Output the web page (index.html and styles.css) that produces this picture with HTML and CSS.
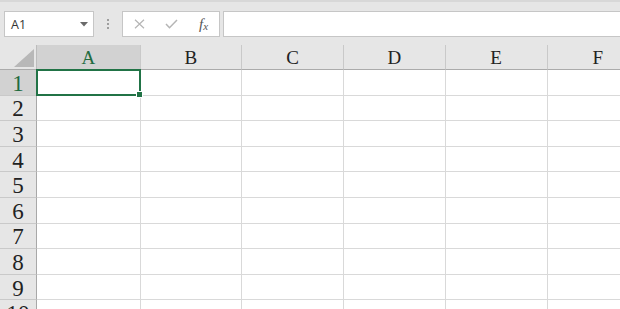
FILE: index.html
```html
<!DOCTYPE html>
<html>
<head>
<meta charset="utf-8">
<link rel="stylesheet" href="styles.css">
</head>
<body>
<div class="app">
  <div class="toolbar">
    <div class="namebox">
      <span class="ref">A1</span>
      <svg class="caret" width="8" height="5" viewBox="0 0 8 5"><polygon points="0,0 8,0 4,4.5" fill="#6a6a6a"/></svg>
    </div>
    <div class="dots"><span></span><span></span><span></span></div>
    <div class="fbtns">
      <svg class="ico" width="11" height="10" viewBox="0 0 11 10"><path d="M1 0.8 L10 9.2 M10 0.8 L1 9.2" stroke="#b5b5b5" stroke-width="1.2" fill="none"/></svg>
      <svg class="ico" width="13" height="10" viewBox="0 0 13 10"><path d="M1 5 L4.5 8.7 L12 1" stroke="#b5b5b5" stroke-width="1.5" fill="none"/></svg>
      <span class="fx">f<span class="x">x</span></span>
    </div>
    <div class="finput"></div>
  </div>
  <div class="sheet">
    <div class="corner"><svg width="20" height="18" viewBox="0 0 20 18"><polygon points="20,0 20,18 0,18" fill="#b8b8b8"/></svg></div>
    <div class="ch sel">A</div>
    <div class="ch">B</div>
    <div class="ch">C</div>
    <div class="ch">D</div>
    <div class="ch">E</div>
    <div class="ch">F</div>

    <div class="rh sel">1</div><div class="c active"><span class="handle"></span></div><div class="c"></div><div class="c"></div><div class="c"></div><div class="c"></div><div class="c"></div>
    <div class="rh">2</div><div class="c"></div><div class="c"></div><div class="c"></div><div class="c"></div><div class="c"></div><div class="c"></div>
    <div class="rh">3</div><div class="c"></div><div class="c"></div><div class="c"></div><div class="c"></div><div class="c"></div><div class="c"></div>
    <div class="rh">4</div><div class="c"></div><div class="c"></div><div class="c"></div><div class="c"></div><div class="c"></div><div class="c"></div>
    <div class="rh">5</div><div class="c"></div><div class="c"></div><div class="c"></div><div class="c"></div><div class="c"></div><div class="c"></div>
    <div class="rh">6</div><div class="c"></div><div class="c"></div><div class="c"></div><div class="c"></div><div class="c"></div><div class="c"></div>
    <div class="rh">7</div><div class="c"></div><div class="c"></div><div class="c"></div><div class="c"></div><div class="c"></div><div class="c"></div>
    <div class="rh">8</div><div class="c"></div><div class="c"></div><div class="c"></div><div class="c"></div><div class="c"></div><div class="c"></div>
    <div class="rh">9</div><div class="c"></div><div class="c"></div><div class="c"></div><div class="c"></div><div class="c"></div><div class="c"></div>
    <div class="rh">10</div><div class="c"></div><div class="c"></div><div class="c"></div><div class="c"></div><div class="c"></div><div class="c"></div>
  </div>
</div>
</body>
</html>
```
FILE: styles.css
```css
* { box-sizing: border-box; }
html, body { margin: 0; padding: 0; }
body {
  width: 620px;
  height: 309px;
  overflow: hidden;
  background: #e6e6e6;
  font-family: "Liberation Sans", Arial, sans-serif;
}
.app {
  display: flex;
  flex-direction: column;
  width: 620px;
  height: 309px;
  overflow: hidden;
  border-top: 2px solid #d8d8d8;
}
.toolbar {
  display: flex;
  align-items: stretch;
  height: 43px;
  padding: 9px 0 8px 4px;
  background: #e6e6e6;
}
.namebox {
  width: 90px;
  background: #fff;
  border: 1px solid #c6c6c6;
  display: flex;
  align-items: center;
  justify-content: space-between;
  padding: 0 5px 0 6px;
}
.ref {
  font-family: "Open Sans", "Noto Sans", sans-serif;
  font-size: 12.5px;
  color: #333;
}
.caret { margin-top: 1px; }
.dots {
  width: 28px;
  display: flex;
  flex-direction: column;
  align-items: center;
  justify-content: center;
  gap: 2px;
}
.dots span {
  width: 2px;
  height: 2px;
  background: #9e9e9e;
}
.fbtns {
  width: 98px;
  background: #fff;
  border: 1px solid #c6c6c6;
  display: flex;
  align-items: center;
  padding: 0 0 0 11px;
  gap: 20px;
}
.fx {
  font-family: "Liberation Serif", "Times New Roman", serif;
  font-style: italic;
  font-size: 15px;
  color: #555;
  margin-left: 1px;
}
.fx .x { font-size: 11px; position: relative; top: 1px; }
.finput {
  flex: 1;
  margin-left: 3px;
  background: #fff;
  border: 1px solid #c6c6c6;
  border-right: none;
}
.sheet {
  flex: 1;
  display: grid;
  grid-template-columns: 37px 103.5px repeat(5, 101.75px);
  grid-template-rows: 25px;
  grid-auto-rows: 25.6px;
  background: #fff;
  overflow: hidden;
}
.corner {
  background: #e6e6e6;
  border-right: 1px solid #bcbcbc;
  border-bottom: 1px solid #ababab;
  display: flex;
  align-items: flex-end;
  justify-content: flex-end;
  padding: 0 2px 2px 0;
}
.ch {
  background: #e6e6e6;
  border-right: 1px solid #c9c9c9;
  border-bottom: 1px solid #ababab;
  display: flex;
  align-items: center;
  justify-content: center;
  font-family: "Liberation Serif", "Times New Roman", serif;
  font-size: 19px;
  color: #222;
  padding-top: 2px;
}
.ch.sel { background: #d2d2d2; color: #1f6b40; }
.rh {
  background: #e6e6e6;
  border-right: 1px solid #a8a8a8;
  border-bottom: 1px solid #c9c9c9;
  display: flex;
  align-items: center;
  justify-content: center;
  font-family: "Liberation Serif", "Times New Roman", serif;
  font-size: 23px;
  color: #222;
  padding-top: 3px;
}
.rh.sel { background: #d2d2d2; color: #1f6b40; }
.c {
  border-right: 1px solid #d9d9d9;
  border-bottom: 1px solid #d9d9d9;
}
.c.active {
  position: relative;
}
.c.active::after {
  content: "";
  position: absolute;
  left: -1px;
  top: -1px;
  right: -1px;
  bottom: -1px;
  border: 2px solid #217346;
}
.handle {
  position: absolute;
  right: -3px;
  bottom: -3px;
  width: 5px;
  height: 5px;
  background: #217346;
  border: 1px solid #fff;
  box-sizing: content-box;
  z-index: 2;
}
```
